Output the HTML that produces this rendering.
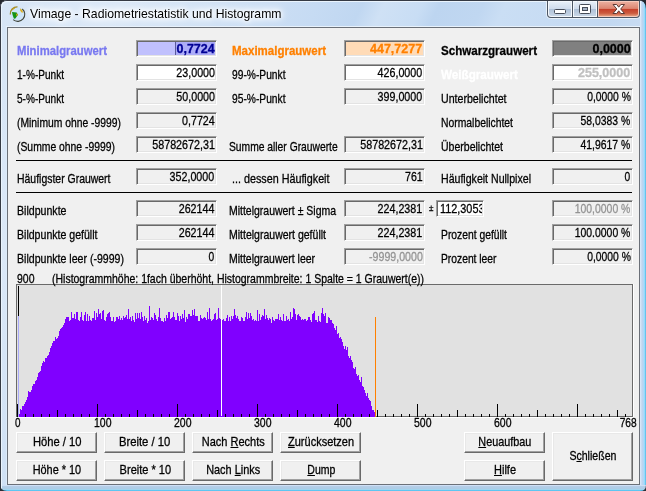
<!DOCTYPE html>
<html><head><meta charset="utf-8"><title>Vimage - Radiometriestatistik und Histogramm</title>
<style>
html,body{margin:0;padding:0}
body{width:646px;height:491px;overflow:hidden;position:relative;background:#c0d8f0;font-family:"Liberation Sans",sans-serif}
.t{position:absolute;white-space:pre;font:13px/13px "Liberation Sans",sans-serif;color:#000;-webkit-text-stroke:0.3px}
.t.b{font-weight:bold}
.t u{text-decoration:underline;text-decoration-thickness:1px;text-underline-offset:1px}
.ttl{-webkit-text-stroke:0;text-shadow:0 0 4px #fff,0 0 6px #fff,0 0 8px #fff,0 0 10px #fff,0 0 12px #fff}
.f{position:absolute;box-sizing:border-box;border:1px solid;border-color:#a0a0a0 #fff #fff #a0a0a0;box-shadow:inset 1px 1px 0 #696969,inset -1px -1px 0 #e3e3e3}
.btn{position:absolute;box-sizing:border-box;background:#f0f0f0;border:1px solid;border-color:#fff #696969 #696969 #fff;box-shadow:inset -1px -1px 0 #a0a0a0,inset 1px 1px 0 #e8e8e8}
.hist{position:absolute;left:0;top:0}
#txt{position:absolute;left:0;top:0;width:646px;height:491px;will-change:transform}
.sep{position:absolute;left:16px;width:616px;height:1px;background:#000}
#frame{position:absolute;left:0;top:0;width:646px;height:491px;background:linear-gradient(115deg,#d6e5f6 0,#dbe8f7 110px,#c6dbf3 290px,#c0d7f1 330px,#cfe1f5 350px,#c8ddf4 385px,#bdd5f0 400px,#c0d7f1 440px,#cadef4 460px,#c6dbf3 520px,#c2d8f1 560px,#cfe0f4 625px,#d8e6f7 646px)}
#client{position:absolute;left:7px;top:27px;width:631px;height:456px;border:1px solid #6b7078;background:#f0f0f0}
</style></head>
<body>
<div id="frame"></div>
<svg class="hist" width="646" height="491" viewBox="0 0 646 491">
<defs>
<linearGradient id="gr" x1="0" x2="1" y1="0" y2="0"><stop offset="0" stop-color="#deecfb"/><stop offset="0.35" stop-color="#c0d4ee"/><stop offset="0.6" stop-color="#b0d8f8"/><stop offset="0.8" stop-color="#8cdcfc"/><stop offset="1" stop-color="#4cb0e0"/></linearGradient>
<linearGradient id="gb" x1="0" x2="0" y1="0" y2="1"><stop offset="0" stop-color="#dce8fc"/><stop offset="0.25" stop-color="#b4cee8"/><stop offset="0.6" stop-color="#aecce6"/><stop offset="0.8" stop-color="#9cd8f2"/><stop offset="1" stop-color="#30b8f0"/></linearGradient>
<linearGradient id="gmin" x1="0" x2="0" y1="0" y2="1"><stop offset="0" stop-color="#e6eef7"/><stop offset="0.47" stop-color="#d0dcec"/><stop offset="0.53" stop-color="#b0c2d8"/><stop offset="1" stop-color="#c8d6e6"/></linearGradient>
<linearGradient id="gcl" x1="0" x2="0" y1="0" y2="1"><stop offset="0" stop-color="#eaac9c"/><stop offset="0.46" stop-color="#dc8672"/><stop offset="0.52" stop-color="#c6402a"/><stop offset="0.8" stop-color="#cc5a3e"/><stop offset="1" stop-color="#e29a7a"/></linearGradient>
</defs>
<!-- right & bottom frame -->
<rect x="640" y="1" width="6" height="490" fill="url(#gr)"/>
<rect x="1" y="485" width="645" height="6" fill="url(#gb)"/>
<!-- outer dark border top & left -->
<path d="M0 491V7Q0 0 7 0H638Q646 0 646 8V0H646V1H7Q1 1 1 7V491z" fill="#353a44"/>
<path d="M1 491V7Q1 1 7 1H640V2H8Q2 2 2 8V491z" fill="#eaf4fd"/>
<rect x="6" y="27" width="1" height="458" fill="#dcebfa"/>
<rect x="6" y="26" width="634" height="1" fill="#e8f2fc"/>
<!-- corner darkening -->
<path d="M0 0H8Q0 0 0 8z" fill="#23272e"/>
<path d="M646 0V9Q646 0 637 0z" fill="#23272e"/>
<path d="M0 491V484Q0 491 7 491z" fill="#2a2e36"/>
<path d="M646 491V485Q646 491 640 491z" fill="#2a3038"/>
<!-- caption buttons -->
<path d="M546.500 1V14.500Q546.500 18.500 550.500 18.500H636.500Q640.500 18.500 640.500 14.500V1" fill="none" stroke="#edf4fb" stroke-width="1" opacity="0.9"/>
<path d="M547 1H640V14Q640 18 636 18H551Q547 18 547 14z" fill="#4c5664"/>
<path d="M548 1H572V17H551Q548 17 548 14z" fill="#f4f8fc"/>
<path d="M549 2H571V16H551.500Q549 16 549 13.500z" fill="url(#gmin)"/>
<rect x="573" y="1" width="24" height="16" fill="#f4f8fc"/>
<rect x="574" y="2" width="22" height="14" fill="url(#gmin)"/>
<path d="M598 1H639V14Q639 17 636 17H598z" fill="#f6cabc"/>
<path d="M599 2H638V13.500Q638 16 635.500 16H599z" fill="url(#gcl)"/>
<!-- min glyph -->
<rect x="554.500" y="9.500" width="11" height="4" rx="1" fill="#fff" stroke="#464c58" stroke-width="1"/>
<!-- max glyph -->
<rect x="579.500" y="4.500" width="11" height="9" rx="1" fill="#fff" stroke="#464c58" stroke-width="1"/>
<rect x="582.500" y="7.500" width="5" height="3" fill="#a4b2c4" stroke="#464c58" stroke-width="1"/>
<!-- close glyph -->
<path d="M613 4.500H616.700L618.750 7.200L620.800 4.500H624.500L620.700 9L624.500 13.500H620.800L618.750 10.800L616.700 13.500H613L616.800 9z" fill="#fff" stroke="#5e3a34" stroke-width="1" stroke-linejoin="round"/>
<!-- app icon -->
<circle cx="17" cy="13.700" r="6.800" fill="#cde5f8"/>
<path d="M13.200 19.700A7 7 0 0 0 22.300 9" fill="none" stroke="#3c4238" stroke-width="1.100"/>
<path d="M10.300 14.500A7 7 0 0 1 17.500 6.800" fill="none" stroke="#9c8a28" stroke-width="1.300"/>
<path d="M10.800 11.200Q12 8 16 7.300L14.500 8.800L12.300 10.200z" fill="#c89c20"/>
<path d="M20 8.300Q22.800 9.500 23.200 12.800L21.200 12.300L20.200 10.300z" fill="#e0b020"/>
<path d="M12 11.900L16.600 12.600L18 14.800L15.400 18.600L14 18.800L12.600 15z" fill="#149414"/>
<path d="M15.800 13.200L18.200 14.700L16.600 16.300z" fill="#d4a418"/>
</svg>
<div id="client"></div>
<div class="sep" style="top:160px"></div>
<div class="sep" style="top:192px"></div>
<div class="f" style="left:136px;top:40px;width:81px;height:17px;background:#c0c0fd"></div>
<div class="f" style="left:136px;top:64px;width:81px;height:17px;background:#fff"></div>
<div class="f" style="left:136px;top:88px;width:81px;height:17px;background:#f0f0f0"></div>
<div class="f" style="left:136px;top:112px;width:81px;height:17px;background:#f0f0f0"></div>
<div class="f" style="left:136px;top:136px;width:81px;height:17px;background:#f0f0f0"></div>
<div class="f" style="left:136px;top:168px;width:81px;height:17px;background:#f0f0f0"></div>
<div class="f" style="left:136px;top:200px;width:81px;height:17px;background:#f0f0f0"></div>
<div class="f" style="left:136px;top:224px;width:81px;height:17px;background:#f0f0f0"></div>
<div class="f" style="left:136px;top:248px;width:81px;height:17px;background:#f0f0f0"></div>
<div class="f" style="left:344px;top:40px;width:81px;height:17px;background:#ffdbb7"></div>
<div class="f" style="left:344px;top:64px;width:81px;height:17px;background:#fff"></div>
<div class="f" style="left:344px;top:88px;width:81px;height:17px;background:#f0f0f0"></div>
<div class="f" style="left:344px;top:136px;width:81px;height:17px;background:#f0f0f0"></div>
<div class="f" style="left:344px;top:168px;width:81px;height:17px;background:#f0f0f0"></div>
<div class="f" style="left:344px;top:200px;width:81px;height:17px;background:#f0f0f0"></div>
<div class="f" style="left:344px;top:224px;width:81px;height:17px;background:#f0f0f0"></div>
<div class="f" style="left:344px;top:248px;width:81px;height:17px;background:#f0f0f0"></div>
<div class="f" style="left:552px;top:40px;width:81px;height:17px;background:#808080"></div>
<div class="f" style="left:552px;top:64px;width:81px;height:17px;background:#fff"></div>
<div class="f" style="left:552px;top:88px;width:81px;height:17px;background:#f0f0f0"></div>
<div class="f" style="left:552px;top:112px;width:81px;height:17px;background:#f0f0f0"></div>
<div class="f" style="left:552px;top:136px;width:81px;height:17px;background:#f0f0f0"></div>
<div class="f" style="left:552px;top:168px;width:81px;height:17px;background:#f0f0f0"></div>
<div class="f" style="left:552px;top:200px;width:81px;height:17px;background:#f0f0f0"></div>
<div class="f" style="left:552px;top:224px;width:81px;height:17px;background:#f0f0f0"></div>
<div class="f" style="left:552px;top:248px;width:81px;height:17px;background:#f0f0f0"></div>
<div class="f" style="left:436px;top:200px;width:48px;height:17px;background:#fff"></div>
<div style="position:absolute;left:175px;top:42px;width:40px;height:13px;background:#acacf8"></div><div style="position:absolute;left:175px;top:42px;width:1px;height:13px;background:#5a5a9a"></div>
<svg class="hist" width="646" height="491" viewBox="0 0 646 491" shape-rendering="crispEdges">
<rect x="16" y="284" width="617" height="133" fill="#e1e1e1"/>
<path d="M16 284H633V417H16zM17 285V416H632V285z" fill="#6a6a6a" fill-rule="evenodd"/>
<path d="M633 284h1V418H16v-1H633z" fill="#fff"/>
<rect x="18" y="286" width="1" height="30" fill="#000"/>
<rect x="18" y="316" width="1" height="101" fill="#a8a8f8"/>
<path d="M19 417V414h1V417zM20 417V409h1V417zM21 417V410h1V417zM22 417V406h1V417zM23 417V406h1V417zM24 417V404h1V417zM25 417V402h1V417zM26 417V400h1V417zM27 417V397h1V417zM28 417V391h1V417zM29 417V392h1V417zM30 417V392h1V417zM31 417V390h1V417zM32 417V386h1V417zM33 417V384h1V417zM34 417V384h1V417zM35 417V381h1V417zM36 417V380h1V417zM37 417V377h1V417zM38 417V373h1V417zM39 417V372h1V417zM40 417V371h1V417zM41 417V366h1V417zM42 417V363h1V417zM43 417V361h1V417zM44 417V362h1V417zM45 417V358h1V417zM46 417V358h1V417zM47 417V356h1V417zM48 417V355h1V417zM49 417V352h1V417zM50 417V348h1V417zM51 417V346h1V417zM52 417V343h1V417zM53 417V341h1V417zM54 417V341h1V417zM55 417V337h1V417zM56 417V339h1V417zM57 417V338h1V417zM58 417V336h1V417zM59 417V331h1V417zM60 417V329h1V417zM61 417V328h1V417zM62 417V327h1V417zM63 417V325h1V417zM64 417V323h1V417zM65 417V319h1V417zM66 417V317h1V417zM67 417V317h1V417zM68 417V317h1V417zM69 417V321h1V417zM70 417V320h1V417zM71 417V312h1V417zM72 417V318h1V417zM73 417V318h1V417zM74 417V314h1V417zM75 417V319h1V417zM76 417V312h1V417zM77 417V312h1V417zM78 417V320h1V417zM79 417V321h1V417zM80 417V317h1V417zM81 417V312h1V417zM82 417V320h1V417zM83 417V321h1V417zM84 417V315h1V417zM85 417V312h1V417zM86 417V321h1V417zM87 417V314h1V417zM88 417V321h1V417zM89 417V316h1V417zM90 417V320h1V417zM91 417V321h1V417zM92 417V318h1V417zM93 417V318h1V417zM94 417V311h1V417zM95 417V320h1V417zM96 417V313h1V417zM97 417V317h1V417zM98 417V309h1V417zM99 417V314h1V417zM100 417V313h1V417zM101 417V319h1V417zM102 417V311h1V417zM103 417V310h1V417zM104 417V320h1V417zM105 417V321h1V417zM106 417V317h1V417zM107 417V314h1V417zM108 417V313h1V417zM109 417V312h1V417zM110 417V317h1V417zM111 417V321h1V417zM112 417V321h1V417zM113 417V317h1V417zM114 417V322h1V417zM115 417V321h1V417zM116 417V317h1V417zM117 417V317h1V417zM118 417V319h1V417zM119 417V316h1V417zM120 417V320h1V417zM121 417V318h1V417zM122 417V320h1V417zM123 417V316h1V417zM124 417V318h1V417zM125 417V317h1V417zM126 417V315h1V417zM127 417V319h1V417zM128 417V309h1V417zM129 417V319h1V417zM130 417V317h1V417zM131 417V321h1V417zM132 417V316h1V417zM133 417V320h1V417zM134 417V322h1V417zM135 417V313h1V417zM136 417V319h1V417zM137 417V313h1V417zM138 417V318h1V417zM139 417V313h1V417zM140 417V319h1V417zM141 417V312h1V417zM142 417V317h1V417zM143 417V321h1V417zM144 417V316h1V417zM145 417V320h1V417zM146 417V318h1V417zM147 417V323h1V417zM148 417V321h1V417zM149 417V306h1V417zM150 417V320h1V417zM151 417V317h1V417zM152 417V318h1V417zM153 417V320h1V417zM154 417V313h1V417zM155 417V315h1V417zM156 417V319h1V417zM157 417V321h1V417zM158 417V317h1V417zM159 417V308h1V417zM160 417V318h1V417zM161 417V321h1V417zM162 417V321h1V417zM163 417V322h1V417zM164 417V318h1V417zM165 417V321h1V417zM166 417V315h1V417zM167 417V318h1V417zM168 417V312h1V417zM169 417V312h1V417zM170 417V319h1V417zM171 417V318h1V417zM172 417V317h1V417zM173 417V312h1V417zM174 417V317h1V417zM175 417V320h1V417zM176 417V320h1V417zM177 417V313h1V417zM178 417V316h1V417zM179 417V321h1V417zM180 417V316h1V417zM181 417V319h1V417zM182 417V314h1V417zM183 417V318h1V417zM184 417V310h1V417zM185 417V322h1V417zM186 417V317h1V417zM187 417V319h1V417zM188 417V314h1V417zM189 417V314h1V417zM190 417V316h1V417zM191 417V316h1V417zM192 417V310h1V417zM193 417V315h1V417zM194 417V309h1V417zM195 417V316h1V417zM196 417V316h1V417zM197 417V316h1V417zM198 417V321h1V417zM199 417V321h1V417zM200 417V315h1V417zM201 417V318h1V417zM202 417V319h1V417zM203 417V318h1V417zM204 417V317h1V417zM205 417V318h1V417zM206 417V320h1V417zM207 417V312h1V417zM208 417V319h1V417zM209 417V308h1V417zM210 417V319h1V417zM211 417V321h1V417zM212 417V320h1V417zM213 417V319h1V417zM214 417V314h1V417zM215 417V313h1V417zM216 417V320h1V417zM217 417V319h1V417zM218 417V308h1V417zM219 417V318h1V417zM220 417V319h1V417zM221 417V317h1V417zM222 417V320h1V417zM223 417V319h1V417zM224 417V321h1V417zM225 417V321h1V417zM226 417V318h1V417zM227 417V315h1V417zM228 417V321h1V417zM229 417V317h1V417zM230 417V321h1V417zM231 417V316h1V417zM232 417V319h1V417zM233 417V316h1V417zM234 417V309h1V417zM235 417V315h1V417zM236 417V318h1V417zM237 417V316h1V417zM238 417V319h1V417zM239 417V321h1V417zM240 417V321h1V417zM241 417V317h1V417zM242 417V318h1V417zM243 417V321h1V417zM244 417V321h1V417zM245 417V317h1V417zM246 417V312h1V417zM247 417V319h1V417zM248 417V313h1V417zM249 417V318h1V417zM250 417V313h1V417zM251 417V316h1V417zM252 417V320h1V417zM253 417V319h1V417zM254 417V321h1V417zM255 417V320h1V417zM256 417V321h1V417zM257 417V310h1V417zM258 417V321h1V417zM259 417V314h1V417zM260 417V320h1V417zM261 417V317h1V417zM262 417V315h1V417zM263 417V316h1V417zM264 417V309h1V417zM265 417V319h1V417zM266 417V315h1V417zM267 417V318h1V417zM268 417V320h1V417zM269 417V318h1V417zM270 417V319h1V417zM271 417V323h1V417zM272 417V317h1V417zM273 417V320h1V417zM274 417V321h1V417zM275 417V319h1V417zM276 417V319h1V417zM277 417V319h1V417zM278 417V314h1V417zM279 417V320h1V417zM280 417V317h1V417zM281 417V320h1V417zM282 417V321h1V417zM283 417V314h1V417zM284 417V321h1V417zM285 417V321h1V417zM286 417V316h1V417zM287 417V320h1V417zM288 417V319h1V417zM289 417V321h1V417zM290 417V312h1V417zM291 417V319h1V417zM292 417V317h1V417zM293 417V308h1V417zM294 417V309h1V417zM295 417V314h1V417zM296 417V320h1V417zM297 417V315h1V417zM298 417V314h1V417zM299 417V316h1V417zM300 417V317h1V417zM301 417V320h1V417zM302 417V319h1V417zM303 417V320h1V417zM304 417V319h1V417zM305 417V319h1V417zM306 417V321h1V417zM307 417V320h1V417zM308 417V317h1V417zM309 417V317h1V417zM310 417V320h1V417zM311 417V322h1V417zM312 417V314h1V417zM313 417V313h1V417zM314 417V311h1V417zM315 417V320h1V417zM316 417V320h1V417zM317 417V322h1V417zM318 417V316h1V417zM319 417V321h1V417zM320 417V322h1V417zM321 417V313h1V417zM322 417V308h1V417zM323 417V314h1V417zM324 417V316h1V417zM325 417V313h1V417zM326 417V323h1V417zM327 417V323h1V417zM328 417V317h1V417zM329 417V318h1V417zM330 417V320h1V417zM331 417V320h1V417zM332 417V323h1V417zM333 417V324h1V417zM334 417V328h1V417zM335 417V330h1V417zM336 417V326h1V417zM337 417V334h1V417zM338 417V333h1V417zM339 417V338h1V417zM340 417V337h1V417zM341 417V339h1V417zM342 417V342h1V417zM343 417V346h1V417zM344 417V349h1V417zM345 417V346h1V417zM346 417V350h1V417zM347 417V347h1V417zM348 417V356h1V417zM349 417V358h1V417zM350 417V356h1V417zM351 417V360h1V417zM352 417V362h1V417zM353 417V368h1V417zM354 417V369h1V417zM355 417V367h1V417zM356 417V374h1V417zM357 417V376h1V417zM358 417V375h1V417zM359 417V380h1V417zM360 417V382h1V417zM361 417V377h1V417zM362 417V386h1V417zM363 417V387h1V417zM364 417V390h1V417zM365 417V393h1V417zM366 417V396h1V417zM367 417V393h1V417zM368 417V398h1V417zM369 417V400h1V417zM370 417V401h1V417zM371 417V406h1V417zM372 417V410h1V417zM373 417V410h1V417zM374 417V412h1V417z" fill="#8000ff"/>
<rect x="221" y="285" width="1" height="131" fill="#fff"/>
<rect x="375" y="317" width="1" height="100" fill="#ff8000"/>
<path d="M17 417v-13h1v13zM25 417v-3h1v3zM33 417v-3h1v3zM41 417v-3h1v3zM49 417v-3h1v3zM57 417v-7h1v7zM65 417v-3h1v3zM73 417v-3h1v3zM81 417v-3h1v3zM89 417v-3h1v3zM97 417v-13h1v13zM105 417v-3h1v3zM113 417v-3h1v3zM121 417v-3h1v3zM129 417v-3h1v3zM137 417v-7h1v7zM145 417v-3h1v3zM153 417v-3h1v3zM161 417v-3h1v3zM169 417v-3h1v3zM177 417v-13h1v13zM185 417v-3h1v3zM193 417v-3h1v3zM201 417v-3h1v3zM209 417v-3h1v3zM217 417v-7h1v7zM225 417v-3h1v3zM233 417v-3h1v3zM241 417v-3h1v3zM249 417v-3h1v3zM257 417v-13h1v13zM265 417v-3h1v3zM273 417v-3h1v3zM281 417v-3h1v3zM289 417v-3h1v3zM297 417v-7h1v7zM305 417v-3h1v3zM313 417v-3h1v3zM321 417v-3h1v3zM329 417v-3h1v3zM337 417v-13h1v13zM345 417v-3h1v3zM353 417v-3h1v3zM361 417v-3h1v3zM369 417v-3h1v3zM377 417v-7h1v7zM385 417v-3h1v3zM393 417v-3h1v3zM401 417v-3h1v3zM409 417v-3h1v3zM417 417v-13h1v13zM425 417v-3h1v3zM433 417v-3h1v3zM441 417v-3h1v3zM449 417v-3h1v3zM457 417v-7h1v7zM465 417v-3h1v3zM473 417v-3h1v3zM481 417v-3h1v3zM489 417v-3h1v3zM497 417v-13h1v13zM505 417v-3h1v3zM513 417v-3h1v3zM521 417v-3h1v3zM529 417v-3h1v3zM537 417v-7h1v7zM545 417v-3h1v3zM553 417v-3h1v3zM561 417v-3h1v3zM569 417v-3h1v3zM577 417v-13h1v13zM585 417v-3h1v3zM593 417v-3h1v3zM601 417v-3h1v3zM609 417v-3h1v3zM617 417v-7h1v7zM625 417v-3h1v3z" fill="#000"/>
</svg>
<div class="btn" style="left:16px;top:432px;width:81px;height:21px"></div>
<div class="btn" style="left:104px;top:432px;width:81px;height:21px"></div>
<div class="btn" style="left:192px;top:432px;width:81px;height:21px"></div>
<div class="btn" style="left:280px;top:432px;width:81px;height:21px"></div>
<div class="btn" style="left:16px;top:460px;width:81px;height:21px"></div>
<div class="btn" style="left:104px;top:460px;width:81px;height:21px"></div>
<div class="btn" style="left:192px;top:460px;width:81px;height:21px"></div>
<div class="btn" style="left:280px;top:460px;width:81px;height:21px"></div>
<div class="btn" style="left:464px;top:432px;width:81px;height:21px"></div>
<div class="btn" style="left:464px;top:460px;width:81px;height:21px"></div>
<div class="btn" style="left:552px;top:432px;width:81px;height:49px"></div>
<div id="txt">
<span class="t b" style="top:44px;left:16.5px;transform-origin:0 0;transform:scaleX(0.8713);color:#7878f0;">Minimalgrauwert</span>
<span class="t" style="top:68px;left:16.5px;transform-origin:0 0;transform:scaleX(0.7743);">1-%-Punkt</span>
<span class="t" style="top:92px;left:16.5px;transform-origin:0 0;transform:scaleX(0.7743);">5-%-Punkt</span>
<span class="t" style="top:116px;left:16.5px;transform-origin:0 0;transform:scaleX(0.7952);">(Minimum ohne -9999)</span>
<span class="t" style="top:140px;left:16.5px;transform-origin:0 0;transform:scaleX(0.7978);">(Summe ohne -9999)</span>
<span class="t" style="top:172px;left:16.5px;transform-origin:0 0;transform:scaleX(0.8038);">Häufigster Grauwert</span>
<span class="t" style="top:204px;left:16.5px;transform-origin:0 0;transform:scaleX(0.8152);">Bildpunkte</span>
<span class="t" style="top:228px;left:16.5px;transform-origin:0 0;transform:scaleX(0.8130);">Bildpunkte gefüllt</span>
<span class="t" style="top:252px;left:16.5px;transform-origin:0 0;transform:scaleX(0.8135);">Bildpunkte leer (-9999)</span>
<span class="t b" style="top:44px;left:232.4px;transform-origin:0 0;transform:scaleX(0.8851);color:#ff8000;">Maximalgrauwert</span>
<span class="t" style="top:68px;left:232.4px;transform-origin:0 0;transform:scaleX(0.7877);">99-%-Punkt</span>
<span class="t" style="top:92px;left:232.4px;transform-origin:0 0;transform:scaleX(0.7877);">95-%-Punkt</span>
<span class="t" style="top:140px;left:228.7px;transform-origin:0 0;transform:scaleX(0.7918);">Summe aller Grauwerte</span>
<span class="t" style="top:172px;left:232.4px;transform-origin:0 0;transform:scaleX(0.8277);">... dessen Häufigkeit</span>
<span class="t" style="top:204px;left:228.7px;transform-origin:0 0;transform:scaleX(0.8055);">Mittelgrauwert ± Sigma</span>
<span class="t" style="top:228px;left:228.7px;transform-origin:0 0;transform:scaleX(0.8086);">Mittelgrauwert gefüllt</span>
<span class="t" style="top:252px;left:228.7px;transform-origin:0 0;transform:scaleX(0.8042);">Mittelgrauwert leer</span>
<span class="t b" style="top:44px;left:440.5px;transform-origin:0 0;transform:scaleX(0.8917);">Schwarzgrauwert</span>
<span class="t b" style="top:68px;left:440.5px;transform-origin:0 0;transform:scaleX(0.8983);color:#fff;">Weißgrauwert</span>
<span class="t" style="top:92px;left:440.5px;transform-origin:0 0;transform:scaleX(0.8165);">Unterbelichtet</span>
<span class="t" style="top:116px;left:440.5px;transform-origin:0 0;transform:scaleX(0.7971);">Normalbelichtet</span>
<span class="t" style="top:140px;left:440.5px;transform-origin:0 0;transform:scaleX(0.8093);">Überbelichtet</span>
<span class="t" style="top:172px;left:440.5px;transform-origin:0 0;transform:scaleX(0.8140);">Häufigkeit Nullpixel</span>
<span class="t" style="top:228px;left:440.5px;transform-origin:0 0;transform:scaleX(0.7941);">Prozent gefüllt</span>
<span class="t" style="top:252px;left:440.5px;transform-origin:0 0;transform:scaleX(0.7918);">Prozent leer</span>
<span class="t" style="top:201.475px;font-size:9.5px;left:429.2px;transform-origin:0 0;transform:scaleX(0.8431);">±</span>
<span class="t" style="top:272px;left:16.5px;transform-origin:0 0;transform:scaleX(0.8063);">900</span>
<span class="t" style="top:272px;left:52px;transform-origin:0 0;transform:scaleX(0.8063);">(Histogrammhöhe: 1fach überhöht, Histogrammbreite: 1 Spalte = 1 Grauwert(e))</span>
<span class="t b" style="top:42px;left:174.73px;transform-origin:100% 0;transform:scaleX(0.9631);color:#000094;">0,7724</span>
<span class="t" style="top:66px;left:167.50px;transform-origin:100% 0;transform:scaleX(0.8234);">23,0000</span>
<span class="t" style="top:90px;left:167.50px;transform-origin:100% 0;transform:scaleX(0.8234);">50,0000</span>
<span class="t" style="top:114px;left:174.73px;transform-origin:100% 0;transform:scaleX(0.8223);">0,7724</span>
<span class="t" style="top:138px;left:138.58px;transform-origin:100% 0;transform:scaleX(0.8258);">58782672,31</span>
<span class="t" style="top:170px;left:160.27px;transform-origin:100% 0;transform:scaleX(0.8242);">352,0000</span>
<span class="t" style="top:202px;left:171.11px;transform-origin:100% 0;transform:scaleX(0.8228);">262144</span>
<span class="t" style="top:226px;left:171.11px;transform-origin:100% 0;transform:scaleX(0.8228);">262144</span>
<span class="t" style="top:250px;left:207.27px;transform-origin:100% 0;transform:scaleX(0.7879);">0</span>
<span class="t b" style="top:42px;left:368.27px;transform-origin:100% 0;transform:scaleX(0.9643);color:#ff8000;">447,7277</span>
<span class="t" style="top:66px;left:368.27px;transform-origin:100% 0;transform:scaleX(0.8242);">426,0000</span>
<span class="t" style="top:90px;left:368.27px;transform-origin:100% 0;transform:scaleX(0.8242);">399,0000</span>
<span class="t" style="top:138px;left:346.58px;transform-origin:100% 0;transform:scaleX(0.8258);">58782672,31</span>
<span class="t" style="top:170px;left:400.80px;transform-origin:100% 0;transform:scaleX(0.8156);">761</span>
<span class="t" style="top:202px;left:368.27px;transform-origin:100% 0;transform:scaleX(0.8242);">224,2381</span>
<span class="t" style="top:226px;left:368.27px;transform-origin:100% 0;transform:scaleX(0.8242);">224,2381</span>
<span class="t" style="top:250px;left:356.72px;transform-origin:100% 0;transform:scaleX(0.8163);color:#939393;">-9999,0000</span>
<span class="t b" style="top:42px;left:590.73px;transform-origin:100% 0;transform:scaleX(0.9631);">0,0000</span>
<span class="t b" style="top:66px;left:576.27px;transform-origin:100% 0;transform:scaleX(0.9643);color:#c0c0c0;">255,0000</span>
<span class="t" style="top:90px;left:575.56px;transform-origin:100% 0;transform:scaleX(0.7954);">0,0000 %</span>
<span class="t" style="top:114px;left:568.33px;transform-origin:100% 0;transform:scaleX(0.7994);">58,0383 %</span>
<span class="t" style="top:138px;left:568.33px;transform-origin:100% 0;transform:scaleX(0.7994);">41,9617 %</span>
<span class="t" style="top:170px;left:623.27px;transform-origin:100% 0;transform:scaleX(0.7879);">0</span>
<span class="t" style="top:202px;left:561.09px;transform-origin:100% 0;transform:scaleX(0.8025);color:#939393;">100,0000 %</span>
<span class="t" style="top:226px;left:561.09px;transform-origin:100% 0;transform:scaleX(0.8025);">100.0000 %</span>
<span class="t" style="top:250px;left:575.56px;transform-origin:100% 0;transform:scaleX(0.7954);">0,0000 %</span>
<div style="position:absolute;left:439.5px;top:202px;width:42.5px;height:14px;overflow:hidden"><span class="t" style="left:0;top:0;transform-origin:0 0;transform:scaleX(0.8354)">112,3053</span></div>
<span class="t" style="top:416px;left:14.5px;transform-origin:0 0;transform:scaleX(0.7603);">0</span>
<span class="t" style="top:416px;left:94px;transform-origin:0 0;transform:scaleX(0.8063);">100</span>
<span class="t" style="top:416px;left:174px;transform-origin:0 0;transform:scaleX(0.8063);">200</span>
<span class="t" style="top:416px;left:254px;transform-origin:0 0;transform:scaleX(0.8063);">300</span>
<span class="t" style="top:416px;left:334px;transform-origin:0 0;transform:scaleX(0.8063);">400</span>
<span class="t" style="top:416px;left:414px;transform-origin:0 0;transform:scaleX(0.8063);">500</span>
<span class="t" style="top:416px;left:494px;transform-origin:0 0;transform:scaleX(0.8063);">600</span>
<span class="t" style="top:416px;left:615.30px;transform-origin:100% 0;transform:scaleX(0.7833);">768</span>
<span class="t" style="top:435px;left:28.81px;transform-origin:50% 0;transform:scaleX(0.8603);">Höhe / 10</span>
<span class="t" style="top:435px;left:115.37px;transform-origin:50% 0;transform:scaleX(0.8690);">Breite / 10</span>
<span class="t" style="top:435px;left:195.79px;transform-origin:50% 0;transform:scaleX(0.8465);">Nach <u>R</u>echts</span>
<span class="t" style="top:435px;left:281.98px;transform-origin:50% 0;transform:scaleX(0.8456);"><u>Z</u>urücksetzen</span>
<span class="t" style="top:463px;left:28.09px;transform-origin:50% 0;transform:scaleX(0.8387);">Höhe * 10</span>
<span class="t" style="top:463px;left:114.65px;transform-origin:50% 0;transform:scaleX(0.8484);">Breite * 10</span>
<span class="t" style="top:463px;left:200.84px;transform-origin:50% 0;transform:scaleX(0.8397);">Nach <u>L</u>inks</span>
<span class="t" style="top:463px;left:303.66px;transform-origin:50% 0;transform:scaleX(0.8072);"><u>D</u>ump</span>
<span class="t" style="top:435px;left:473.19px;transform-origin:50% 0;transform:scaleX(0.8330);"><u>N</u>euaufbau</span>
<span class="t" style="top:463px;left:491.99px;transform-origin:50% 0;transform:scaleX(0.8456);"><u>H</u>ilfe</span>
<span class="t" style="top:449px;left:564.09px;transform-origin:50% 0;transform:scaleX(0.8130);">S<u>c</u>hließen</span>
<span class="t ttl" style="top:7px;left:29.5px;transform-origin:0 0;transform:scaleX(0.9391);">Vimage - Radiometriestatistik und Histogramm</span>
</div>
</body></html>
